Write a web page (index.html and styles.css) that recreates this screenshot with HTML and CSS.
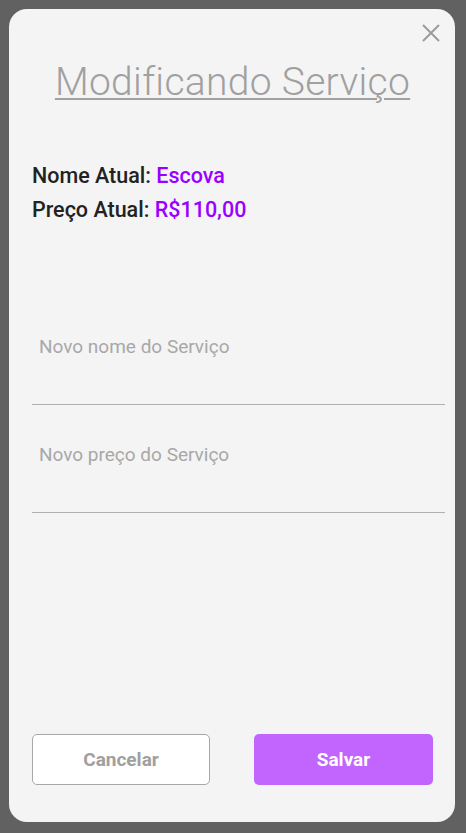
FILE: index.html
```html
<!DOCTYPE html>
<html lang="pt-BR">
<head>
<meta charset="utf-8">
<title>Modificando Serviço</title>
<link rel="stylesheet" href="styles.css">
</head>
<body>
<div class="backdrop">
  <div class="modal">
    <button class="close" aria-label="Fechar">
      <svg width="18" height="18" viewBox="0 0 18 18"><path d="M1 1 L17 17 M17 1 L1 17" stroke="#9b9b9b" stroke-width="2" fill="none"/></svg>
    </button>
    <h1 class="title">Modificando Serviço</h1>
    <div class="info">
      <p><span class="label">Nome Atual:</span> <span class="value">Escova</span></p>
      <p><span class="label">Preço Atual:</span> <span class="value">R$110,00</span></p>
    </div>
    <div class="fields">
      <input class="field" type="text" placeholder="Novo nome do Serviço">
      <input class="field" type="text" placeholder="Novo preço do Serviço">
    </div>
    <div class="actions">
      <button class="btn cancel">Cancelar</button>
      <button class="btn save">Salvar</button>
    </div>
  </div>
</div>
</body>
</html>
```
FILE: styles.css
```css
* { box-sizing: border-box; }
html, body { margin: 0; padding: 0; }
body {
  background: #616161;
  font-family: Roboto, "Liberation Sans", sans-serif;
  width: 466px;
  height: 833px;
  overflow: hidden;
}
.backdrop {
  padding: 9px 11px 11px 9px;
}
.modal {
  position: relative;
  width: 446px;
  height: 813px;
  background: #f4f4f4;
  border-radius: 18px;
  display: flex;
  flex-direction: column;
  padding: 0 22px 0 23px;
}
.close {
  position: absolute;
  top: 15px;
  right: 15px;
  background: none;
  border: none;
  padding: 0;
  width: 18px;
  height: 18px;
  cursor: pointer;
}
.close svg { display: block; }
.title {
  margin: 51px 0 0;
  text-align: center;
  font-size: 39px;
  font-weight: 300;
  color: #a0a0a0;
  text-decoration: underline;
  text-decoration-thickness: 2px;
  text-underline-offset: 3px;
  line-height: 44px;
  letter-spacing: 0.3px;
}
.info {
  margin-top: 55px;
  font-size: 21.5px;
  line-height: 34px;
}
.info p { margin: 0; }
.label { color: #222; font-weight: 500; }
.value { color: #9a00ff; font-weight: 500; }
.fields {
  margin-top: 106px;
  display: flex;
  flex-direction: column;
  gap: 36px;
}
.field {
  height: 72px;
  width: 413px;
  border: none;
  border-bottom: 1px solid #b0b0b0;
  background: transparent;
  font-family: Roboto, "Liberation Sans", sans-serif;
  font-size: 19px;
  padding: 0 7px 44px;
  color: #333;
  outline: none;
}
.field::placeholder { color: #a8a8a8; }
.actions {
  margin-top: auto;
  margin-bottom: 37px;
  display: flex;
  justify-content: space-between;
  width: 401px;
}
.btn {
  width: 178px;
  height: 51px;
  border-radius: 5px;
  font-family: Roboto, "Liberation Sans", sans-serif;
  font-size: 19px;
  font-weight: 700;
  cursor: pointer;
}
.cancel {
  background: #fff;
  border: 1px solid #a8a8a8;
  color: #a0a0a0;
}
.save {
  width: 179px;
  background: #c264fe;
  border: none;
  color: #fff;
}
```
